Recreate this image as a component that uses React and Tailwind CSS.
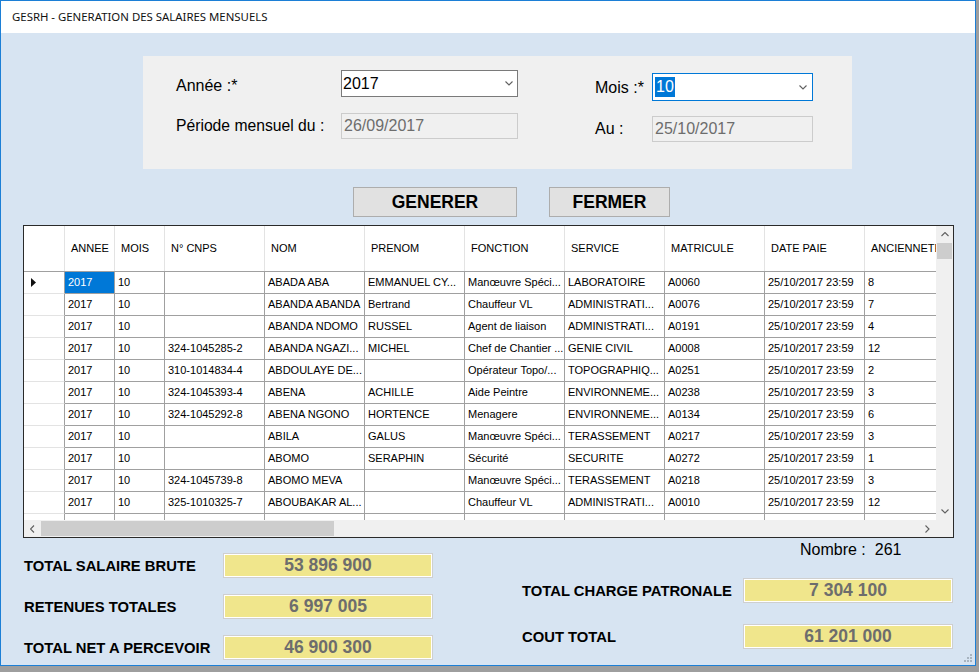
import React from 'react'

const columns = [
  { label: 'ANNEE', w: 'w-[50px]' },
  { label: 'MOIS', w: 'w-[50px]' },
  { label: 'N° CNPS', w: 'w-[100px]' },
  { label: 'NOM', w: 'w-[100px]' },
  { label: 'PRENOM', w: 'w-[100px]' },
  { label: 'FONCTION', w: 'w-[100px]' },
  { label: 'SERVICE', w: 'w-[100px]' },
  { label: 'MATRICULE', w: 'w-[100px]' },
  { label: 'DATE PAIE', w: 'w-[100px]' },
  { label: 'ANCIENNETE', w: 'w-[100px]' }
]

const DATE = '25/10/2017 23:59'

const rows = [
  ['2017', '10', '', 'ABADA ABA', 'EMMANUEL CY...', 'Manœuvre Spéci...', 'LABORATOIRE', 'A0060', DATE, '8'],
  ['2017', '10', '', 'ABANDA ABANDA', 'Bertrand', 'Chauffeur VL', 'ADMINISTRATI...', 'A0076', DATE, '7'],
  ['2017', '10', '', 'ABANDA NDOMO', 'RUSSEL', 'Agent de liaison', 'ADMINISTRATI...', 'A0191', DATE, '4'],
  ['2017', '10', '324-1045285-2', 'ABANDA NGAZI...', 'MICHEL', 'Chef de Chantier ...', 'GENIE CIVIL', 'A0008', DATE, '12'],
  ['2017', '10', '310-1014834-4', 'ABDOULAYE DE...', '', 'Opérateur Topo/...', 'TOPOGRAPHIQ...', 'A0251', DATE, '2'],
  ['2017', '10', '324-1045393-4', 'ABENA', 'ACHILLE', 'Aide Peintre', 'ENVIRONNEME...', 'A0238', DATE, '3'],
  ['2017', '10', '324-1045292-8', 'ABENA NGONO', 'HORTENCE', 'Menagere', 'ENVIRONNEME...', 'A0134', DATE, '6'],
  ['2017', '10', '', 'ABILA', 'GALUS', 'Manœuvre Spéci...', 'TERASSEMENT', 'A0217', DATE, '3'],
  ['2017', '10', '', 'ABOMO', 'SERAPHIN', 'Sécurité', 'SECURITE', 'A0272', DATE, '1'],
  ['2017', '10', '324-1045739-8', 'ABOMO MEVA', '', 'Manœuvre Spéci...', 'TERASSEMENT', 'A0218', DATE, '3'],
  ['2017', '10', '325-1010325-7', 'ABOUBAKAR AL...', '', 'Chauffeur VL', 'ADMINISTRATI...', 'A0010', DATE, '12'],
  ['', '', '', '', '', '', '', '', '', '']
]

function Chevron({ dir = 'down', className = '' }) {
  const d = {
    down: 'M0.5 0.5 L4 4 L7.5 0.5',
    up: 'M0.5 4 L4 0.5 L7.5 4',
    left: 'M4 0.5 L0.5 4 L4 7.5',
    right: 'M0.5 0.5 L4 4 L0.5 7.5'
  }[dir]
  const box = dir === 'left' || dir === 'right' ? '0 0 5 8' : '0 0 8 5'
  const size = dir === 'left' || dir === 'right' ? { w: 5, h: 8 } : { w: 8, h: 5 }
  return (
    <svg width={size.w} height={size.h} viewBox={box} className={className}>
      <path d={d} fill="none" stroke="#606060" strokeWidth="1.1" />
    </svg>
  )
}

function ValueBox({ value }) {
  return (
    <div className="w-[210px] h-[25px] bg-[#f0e68c] border border-[#cfcfcf] shadow-[inset_0_0_0_1px_#ffffff] flex items-center justify-center text-[17.5px] font-bold text-[#6d6d6d]">
      {value}
    </div>
  )
}

export default function App() {
  return (
    <div className="w-[979px] h-[672px] bg-[#9e9e9e] overflow-hidden font-['Liberation_Sans',Arial,sans-serif] text-black">
      <div className="w-[976px] h-[666px] border border-[#1c7fd6] bg-[#d7e4f2] flex flex-col">
        {/* Title bar */}
        <div className="h-[32px] bg-white flex items-center pl-[11px] shrink-0">
          <span className="text-[11.4px] font-['Noto_Sans',sans-serif] text-[#111]">GESRH - GENERATION DES SALAIRES MENSUELS</span>
        </div>

        {/* Period panel */}
        <div className="ml-[142px] mt-[23px] w-[709px] h-[113px] bg-[#f0f0f0] flex pt-[14px] pl-[33px] shrink-0 text-[16px]">
          <div className="flex flex-col gap-[16px]">
            <div className="flex h-[27px]">
              <span className="w-[165px] pt-[8px] leading-none">Année :*</span>
              <div className="w-[177px] h-[27px] bg-white border border-[#7a7a7a] flex items-center justify-between pl-[1px] pr-[4px]">
                <span>2017</span>
                <Chevron />
              </div>
            </div>
            <div className="flex h-[26px] items-center">
              <span className="w-[165px] text-[15.7px]">Période mensuel du :</span>
              <div className="w-[177px] h-[26px] bg-[#f0f0f0] border border-[#cccccc] flex items-center pl-[2px] text-[#6d6d6d]">
                26/09/2017
              </div>
            </div>
          </div>
          <div className="ml-[77px] pt-[3px] flex flex-col gap-[15px]">
            <div className="flex h-[28px] items-center">
              <span className="w-[57px] pt-[2px]">Mois :*</span>
              <div className="w-[161px] h-[28px] bg-white border border-[#0078d7] flex items-center justify-between pl-[2px] pr-[5px]">
                <span className="bg-[#0078d7] text-white h-[20px] px-[1px] flex items-center">10</span>
                <Chevron />
              </div>
            </div>
            <div className="flex h-[26px] items-center">
              <span className="w-[57px] pb-[1px]">Au :</span>
              <div className="w-[161px] h-[26px] bg-[#f0f0f0] border border-[#cccccc] flex items-center pl-[2px] text-[#6d6d6d]">
                25/10/2017
              </div>
            </div>
          </div>
        </div>

        {/* Buttons */}
        <div className="ml-[352px] mt-[18px] flex gap-[32px] shrink-0">
          <button className="w-[164px] h-[30px] bg-[#e1e1e1] border border-[#adadad] text-[17.5px] font-bold">GENERER</button>
          <button className="w-[121px] h-[30px] bg-[#e1e1e1] border border-[#adadad] text-[17.5px] font-bold">FERMER</button>
        </div>

        {/* Data grid */}
        <div className="ml-[22px] mt-[8px] w-[931px] h-[313px] border border-[#2a2a2a] bg-white flex flex-col shrink-0 text-[11px]">
          <div className="flex h-[294px]">
            <div className="flex-1 overflow-hidden">
              {/* Header */}
              <div className="flex h-[46px] border-b border-[#a0a0a0] w-max">
                <div className="w-[41px] border-r border-[#e3e3e3]" />
                {columns.map(c => (
                  <div key={c.label} className={`${c.w} border-r border-[#e3e3e3] flex items-center pl-[6px] whitespace-nowrap`}>
                    {c.label}
                  </div>
                ))}
              </div>
              {/* Rows */}
              {rows.map((r, i) => (
                <div key={i} className="flex h-[22px] w-max">
                  <div className="w-[41px] border-r border-b border-r-[#a0a0a0] border-b-[#e3e3e3] flex items-center pl-[7px]">
                    {i === 0 && (
                      <svg width="5" height="9" viewBox="0 0 5 9">
                        <path d="M0 0 L5 4.5 L0 9 Z" fill="#111" />
                      </svg>
                    )}
                  </div>
                  {r.map((v, j) => (
                    <div
                      key={j}
                      className={`${columns[j].w} border-r border-b border-[#a0a0a0] flex items-center pl-[3px] whitespace-nowrap overflow-hidden ${i === 0 && j === 0 ? 'bg-[#0078d7] text-white' : ''}`}
                    >
                      {v}
                    </div>
                  ))}
                </div>
              ))}
            </div>
            {/* Vertical scrollbar */}
            <div className="w-[17px] bg-[#f0f0f0] flex flex-col items-center">
              <div className="h-[17px] flex items-center justify-center"><Chevron dir="up" /></div>
              <div className="w-[15px] h-[16px] bg-[#cdcdcd]" />
              <div className="flex-1" />
              <div className="h-[17px] flex items-center justify-center"><Chevron dir="down" /></div>
            </div>
          </div>
          {/* Horizontal scrollbar */}
          <div className="flex h-[17px] bg-[#f0f0f0]">
            <div className="flex-1 flex items-center">
              <div className="w-[17px] flex items-center justify-center"><Chevron dir="left" /></div>
              <div className="w-[293px] h-[15px] bg-[#cdcdcd]" />
              <div className="flex-1" />
              <div className="w-[17px] flex items-center justify-center"><Chevron dir="right" /></div>
            </div>
            <div className="w-[17px]" />
          </div>
        </div>

        {/* Totals */}
        <div className="flex ml-[23px] relative flex-1">
          <div className="flex flex-col pt-[15px] gap-[16px]">
            {[
              ['TOTAL SALAIRE BRUTE', '53 896 900'],
              ['RETENUES TOTALES', '6 997 005'],
              ['TOTAL NET A PERCEVOIR', '46 900 300']
            ].map(([label, value]) => (
              <div key={label} className="flex items-center h-[25px]">
                <span className="w-[199px] text-[14.8px] font-bold pt-[2px]">{label}</span>
                <ValueBox value={value} />
              </div>
            ))}
          </div>
          <div className="ml-[89px] flex flex-col">
            <div className="h-[22px] pt-[2px] pl-[278px] text-[16px] flex items-center">
              <span>Nombre :</span>
              <span className="ml-[9px]">261</span>
            </div>
            <div className="flex items-center h-[25px] mt-[18px]">
              <span className="w-[221px] text-[14.8px] font-bold pt-[2px]">TOTAL CHARGE PATRONALE</span>
              <ValueBox value="7 304 100" />
            </div>
            <div className="flex items-center h-[25px] mt-[21px]">
              <span className="w-[221px] text-[14.8px] font-bold pt-[2px]">COUT TOTAL</span>
              <ValueBox value="61 201 000" />
            </div>
          </div>
          {/* Size grip */}
          <svg className="absolute right-[2px] bottom-[2px]" width="9" height="9" viewBox="0 0 9 9">
            <rect x="6" y="0" width="2" height="2" fill="#a8b4c0" />
            <rect x="3" y="3" width="2" height="2" fill="#a8b4c0" />
            <rect x="6" y="3" width="2" height="2" fill="#a8b4c0" />
            <rect x="0" y="6" width="2" height="2" fill="#a8b4c0" />
            <rect x="3" y="6" width="2" height="2" fill="#a8b4c0" />
            <rect x="6" y="6" width="2" height="2" fill="#a8b4c0" />
          </svg>
        </div>
      </div>
    </div>
  )
}
